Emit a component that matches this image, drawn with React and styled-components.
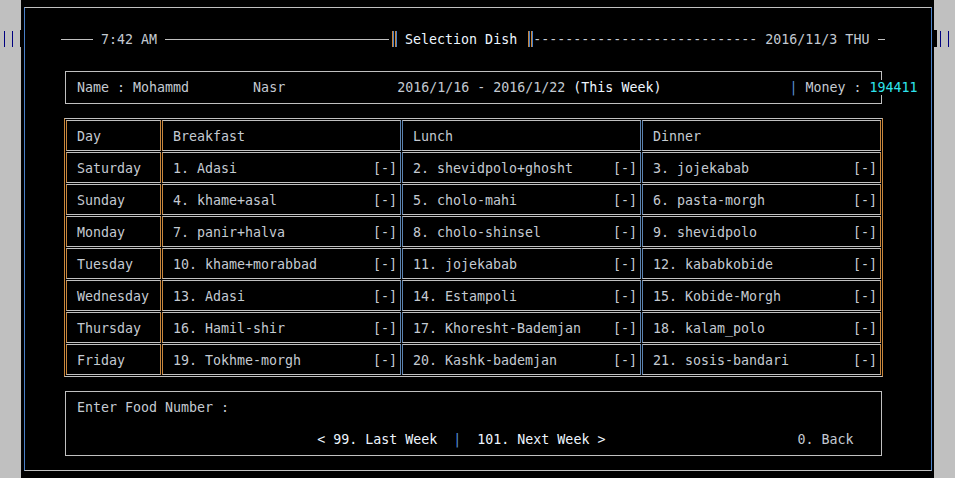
import styled, { createGlobalStyle } from "styled-components";

const GlobalStyle = createGlobalStyle`
  html, body {
    margin: 0;
    padding: 0;
    background: #c0c0c0;
  }
  body {
    font-family: "DejaVu Sans Mono", "Liberation Mono", monospace;
    font-size: 13.3px;
    color: #c4cad2;
  }
`;

const ORANGE = "#c8863c";
const BLUE = "#4a80c8";
const SOFT_BLUE = "#5a82b0";
const GRAY = "#c0c0c0";

const Screen = styled.div`
  display: flex;
  height: 478px;
  overflow: hidden;
`;

const Gutter = styled.div`
  width: ${(p) => p.$w}px;
  flex: none;
  display: flex;
  align-items: flex-start;
  justify-content: ${(p) => (p.$left ? "space-between" : "flex-start")};
  padding: 30px 0 0 ${(p) => (p.$left ? 4 : 0)}px;
  box-sizing: border-box;
`;

const Marks = styled.div`
  display: flex;
  gap: 7px;
  margin: 1px 0 0 ${(p) => p.$offset || 0}px;
`;

const Mark = styled.span`
  width: 1px;
  height: 16px;
  background: #000080;
`;

const Notch = styled.span`
  width: ${(p) => p.$w}px;
  height: 17px;
  background: #000;
`;

const Console = styled.div`
  width: 913px;
  flex: none;
  background: #000;
  padding: 7px 2px 7px 3px;
  box-sizing: border-box;
`;

const Frame = styled.div`
  height: 464px;
  box-sizing: border-box;
  border: 1px solid ${GRAY};
  border-left-color: ${BLUE};
  border-right-color: ${BLUE};
  padding: 23px 0 0 36px;
  display: flex;
  flex-direction: column;
  align-items: flex-start;
`;

const TitleBar = styled.div`
  display: flex;
  align-items: center;
  height: 16px;
  line-height: 16px;
  white-space: pre;
`;

const TitleText = styled.span`
  padding-top: 2px;
  color: ${(p) => (p.$bright ? "#eef6ff" : "inherit")};
`;

const Rule = styled.span`
  width: ${(p) => p.$w}px;
  height: 1px;
  margin-left: ${(p) => p.$ml || 0}px;
  background: ${GRAY};
`;

const DoubleBar = styled.span`
  width: 8px;
  height: 16px;
  display: flex;
  gap: 1px;
  padding-left: 3px;
  box-sizing: border-box;
`;

const Bar = styled.span`
  width: 2px;
  height: 16px;
  box-sizing: border-box;
  border-left: 1px solid ${ORANGE};
  border-right: 1px solid ${BLUE};
`;

const Bright = styled.span`
  color: #eef6ff;
`;

const Cyan = styled.span`
  color: #2ee4ee;
  background: #000;
`;

const Pipe = styled.span`
  color: #5a90d2;
  background: #000;
`;

const Dim = styled.span`
  background: #000;
`;

const InfoBox = styled.div`
  margin: 24px 0 0 4px;
  width: 817px;
  height: 33px;
  box-sizing: border-box;
  border: 1px solid ${GRAY};
  padding: 1px 0 0 11px;
  display: flex;
  align-items: center;
  white-space: pre;
  line-height: 16px;
`;

const Table = styled.div`
  margin: 14px 0 0 3px;
  display: grid;
  grid-template-columns: 95px repeat(3, 239px);
  grid-auto-rows: 31px;
  gap: 1px;
  padding: 1px;
  border: 1px solid ${GRAY};
  border-left-color: ${ORANGE};
  border-right-color: ${ORANGE};
`;

const Cell = styled.div`
  box-sizing: border-box;
  border: 1px solid ${GRAY};
  border-left-color: ${(p) => p.$l};
  border-right-color: ${(p) => p.$r};
  display: flex;
  align-items: center;
  justify-content: space-between;
  padding: 1px 3px 0 10px;
  white-space: pre;
`;

const PromptBox = styled.div`
  margin: 14px 0 0 4px;
  width: 817px;
  height: 65px;
  box-sizing: border-box;
  border: 1px solid ${GRAY};
  padding: 8px 11px 6px;
  display: flex;
  flex-direction: column;
  gap: 16px;
`;

const Line = styled.div`
  height: 16px;
  line-height: 16px;
  white-space: pre;
`;

const columns = [
  { title: "Day", l: ORANGE, r: ORANGE },
  { title: "Breakfast", l: ORANGE, r: SOFT_BLUE },
  { title: "Lunch", l: SOFT_BLUE, r: SOFT_BLUE },
  { title: "Dinner", l: SOFT_BLUE, r: ORANGE },
];

const week = [
  ["Saturday", "1. Adasi", "2. shevidpolo+ghosht", "3. jojekabab"],
  ["Sunday", "4. khame+asal", "5. cholo-mahi", "6. pasta-morgh"],
  ["Monday", "7. panir+halva", "8. cholo-shinsel", "9. shevidpolo"],
  ["Tuesday", "10. khame+morabbad", "11. jojekabab", "12. kababkobide"],
  ["Wednesday", "13. Adasi", "14. Estampoli", "15. Kobide-Morgh"],
  ["Thursday", "16. Hamil-shir", "17. Khoresht-Bademjan", "18. kalam_polo"],
  ["Friday", "19. Tokhme-morgh", "20. Kashk-bademjan", "21. sosis-bandari"],
];

export default function App() {
  return (
    <>
      <GlobalStyle />
      <Screen>
        <Gutter $w={21} $left>
          <Marks>
            <Mark />
            <Mark />
          </Marks>
          <Notch $w={1} />
        </Gutter>

        <Console>
          <Frame>
            <TitleBar>
              <Rule $w={32} />
              <TitleText> 7:42 AM </TitleText>
              <Rule $w={224} />
              <DoubleBar>
                <Bar />
                <Bar />
              </DoubleBar>
              <TitleText $bright> Selection Dish </TitleText>
              <DoubleBar>
                <Bar />
                <Bar />
              </DoubleBar>
              <TitleText>{"-".repeat(28)}</TitleText>
              <TitleText> 2016/11/3 THU </TitleText>
              <Rule $w={7} $ml={1} />
            </TitleBar>

            <InfoBox>
              <span>
                {"Name : Mohammd        Nasr              2016/1/16 - 2016/1/22 "}
                <Bright>(This Week)</Bright>
                {" ".repeat(16)}
                <Pipe>|</Pipe>
                <Dim> Money : </Dim>
                <Cyan>194411</Cyan>
              </span>
            </InfoBox>

            <Table>
              {columns.map((c) => (
                <Cell key={c.title} $l={c.l} $r={c.r}>
                  {c.title}
                </Cell>
              ))}
              {week.map((row) =>
                row.map((text, i) => (
                  <Cell key={row[0] + i} $l={columns[i].l} $r={columns[i].r}>
                    <span>{text}</span>
                    {i > 0 && <span>[-]</span>}
                  </Cell>
                ))
              )}
            </Table>

            <PromptBox>
              <Line>Enter Food Number :</Line>
              <Line>
                {" ".repeat(30)}
                <Bright>&lt; 99. Last Week</Bright>
                {"  "}
                <Pipe>|</Pipe>
                {"  "}
                <Bright>101. Next Week &gt;</Bright>
                {" ".repeat(24)}
                <span>0. Back</span>
              </Line>
            </PromptBox>
          </Frame>
        </Console>

        <Gutter $w={21}>
          <Notch $w={3} />
          <Marks $offset={3}>
            <Mark />
            <Mark />
          </Marks>
        </Gutter>
      </Screen>
    </>
  );
}
